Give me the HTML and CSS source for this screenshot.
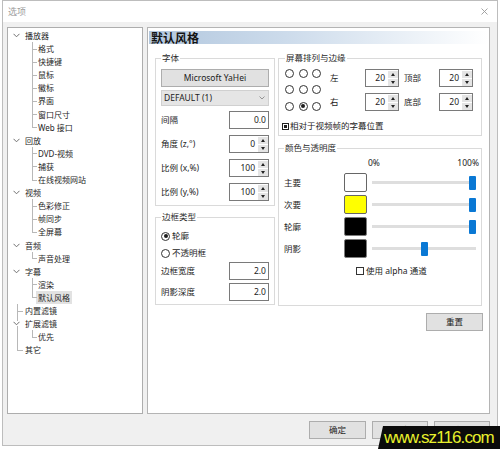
FILE: index.html
```html
<!DOCTYPE html>
<html lang="zh-CN">
<head>
<meta charset="utf-8">
<title>选项</title>
<link rel="stylesheet" href="styles.css">
</head>
<body>
<div class="window">
  <div class="titlebar">
    <span class="title">选项</span>
    <svg class="close" width="7" height="7" viewBox="0 0 7 7"><path d="M0.5 0.5L6.5 6.5M6.5 0.5L0.5 6.5" stroke="#9a9a9a" stroke-width="0.9" fill="none"/></svg>
  </div>

  <div class="main">
    <div class="tree">
      <div class="row root"><svg class="chev" width="7" height="5" viewBox="0 0 7 5"><polyline points="0.5,0.8 3.5,3.8 6.5,0.8" fill="none" stroke="#707070" stroke-width="1"/></svg>播放器</div>
      <div class="children">
        <div class="row child">格式</div>
        <div class="row child">快捷键</div>
        <div class="row child">鼠标</div>
        <div class="row child">徽标</div>
        <div class="row child">界面</div>
        <div class="row child">窗口尺寸</div>
        <div class="row child">Web 接口</div>
      </div>
      <div class="row root"><svg class="chev" width="7" height="5" viewBox="0 0 7 5"><polyline points="0.5,0.8 3.5,3.8 6.5,0.8" fill="none" stroke="#707070" stroke-width="1"/></svg>回放</div>
      <div class="children">
        <div class="row child">DVD-视频</div>
        <div class="row child">捕获</div>
        <div class="row child">在线视频网站</div>
      </div>
      <div class="row root"><svg class="chev" width="7" height="5" viewBox="0 0 7 5"><polyline points="0.5,0.8 3.5,3.8 6.5,0.8" fill="none" stroke="#707070" stroke-width="1"/></svg>视频</div>
      <div class="children">
        <div class="row child">色彩修正</div>
        <div class="row child">帧同步</div>
        <div class="row child">全屏幕</div>
      </div>
      <div class="row root"><svg class="chev" width="7" height="5" viewBox="0 0 7 5"><polyline points="0.5,0.8 3.5,3.8 6.5,0.8" fill="none" stroke="#707070" stroke-width="1"/></svg>音频</div>
      <div class="children">
        <div class="row child">声音处理</div>
      </div>
      <div class="row root"><svg class="chev" width="7" height="5" viewBox="0 0 7 5"><polyline points="0.5,0.8 3.5,3.8 6.5,0.8" fill="none" stroke="#707070" stroke-width="1"/></svg>字幕</div>
      <div class="children">
        <div class="row child">渲染</div>
        <div class="row child"><span class="sel">默认风格</span></div>
      </div>
      <div class="tail">
        <div class="row leaf">内置滤镜</div>
        <div class="row root"><svg class="chev" width="7" height="5" viewBox="0 0 7 5"><polyline points="0.5,0.8 3.5,3.8 6.5,0.8" fill="none" stroke="#707070" stroke-width="1"/></svg>扩展滤镜</div>
        <div class="children">
          <div class="row child">优先</div>
        </div>
        <div class="row leaf">其它</div>
      </div>
    </div>

    <div class="panel">
      <div class="panel-header">默认风格</div>
      <div class="panel-body">
        <div class="col-left">
          <fieldset class="group group-font">
            <legend>字体</legend>
            <button class="btn btn-wide">Microsoft YaHei</button>
            <div class="combo"><span>DEFAULT (1)</span><svg width="6" height="4" viewBox="0 0 6 4"><polyline points="0.5,0.5 3,3 5.5,0.5" fill="none" stroke="#8a8a8a" stroke-width="0.9"/></svg></div>
            <div class="frow first"><span>间隔</span><div class="input">0.0</div></div>
            <div class="frow"><span>角度 (z,°)</span><div class="input spin"><span class="val">0</span><span class="spinner"><i class="up"></i><i class="down"></i></span></div></div>
            <div class="frow"><span>比例 (x,%)</span><div class="input spin"><span class="val">100</span><span class="spinner"><i class="up"></i><i class="down"></i></span></div></div>
            <div class="frow"><span>比例 (y,%)</span><div class="input spin"><span class="val">100</span><span class="spinner"><i class="up"></i><i class="down"></i></span></div></div>
          </fieldset>

          <fieldset class="group group-border">
            <legend>边框类型</legend>
            <div class="rrow"><span class="radio on"></span>轮廓</div>
            <div class="rrow"><span class="radio"></span>不透明框</div>
            <div class="frow tight"><span>边框宽度</span><div class="input">2.0</div></div>
            <div class="frow tight"><span>阴影深度</span><div class="input">2.0</div></div>
          </fieldset>
        </div>

        <div class="col-right">
          <fieldset class="group group-screen">
            <legend>屏幕排列与边缘</legend>
            <div class="align-block">
              <div class="radio-grid">
                <span class="radio"></span><span class="radio"></span><span class="radio"></span>
                <span class="radio"></span><span class="radio"></span><span class="radio"></span>
                <span class="radio"></span><span class="radio on"></span><span class="radio"></span>
              </div>
              <div class="margin-grid">
                <span class="mlabel">左</span>
                <div class="input spin"><span class="val">20</span><span class="spinner"><i class="up"></i><i class="down"></i></span></div>
                <span class="mlabel pad">顶部</span>
                <div class="input spin"><span class="val">20</span><span class="spinner"><i class="up"></i><i class="down"></i></span></div>
                <span class="mlabel">右</span>
                <div class="input spin"><span class="val">20</span><span class="spinner"><i class="up"></i><i class="down"></i></span></div>
                <span class="mlabel pad">底部</span>
                <div class="input spin"><span class="val">20</span><span class="spinner"><i class="up"></i><i class="down"></i></span></div>
              </div>
            </div>
            <div class="check-row rel"><span class="check filled"></span>相对于视频帧的字幕位置</div>
          </fieldset>

          <fieldset class="group group-color">
            <legend>颜色与透明度</legend>
            <div class="color-head"><span>0%</span><span>100%</span></div>
            <div class="color-row"><span class="clabel">主要</span><span class="swatch sw-white"></span><div class="slider" style="--v:100"><span class="thumb"></span></div></div>
            <div class="color-row"><span class="clabel">次要</span><span class="swatch sw-yellow"></span><div class="slider" style="--v:100"><span class="thumb"></span></div></div>
            <div class="color-row"><span class="clabel">轮廓</span><span class="swatch sw-black"></span><div class="slider" style="--v:100"><span class="thumb"></span></div></div>
            <div class="color-row"><span class="clabel">阴影</span><span class="swatch sw-black"></span><div class="slider" style="--v:50"><span class="thumb"></span></div></div>
            <div class="check-row alpha"><span class="check"></span>使用 alpha 通道</div>
          </fieldset>

          <div class="reset-row"><button class="btn btn-reset">重置</button></div>
        </div>
      </div>
    </div>
  </div>

  <div class="footer">
    <button class="btn btn-foot btn-ok">确定</button>
    <button class="btn btn-foot">取消</button>
    <button class="btn btn-foot">应用</button>
  </div>

  <div class="watermark">www.sz116.com</div>
</div>
</body>
</html>
```

FILE: styles.css
```css
* { box-sizing: border-box; }

html, body {
  margin: 0;
  padding: 0;
  background: #ffffff;
}

body {
  width: 500px;
  height: 449px;
  overflow: hidden;
  font-family: "Noto Sans", "Noto Sans CJK SC", sans-serif;
  font-size: 8.5px;
  line-height: 12px;
  color: #1c1c1c;
}

.window {
  position: relative;
  margin-left: 2px;
  width: 496px;
  border: 1px solid #bdbdbd;
  background: #f0f0f0;
}

.titlebar {
  height: 21px;
  background: #ffffff;
  display: flex;
  align-items: center;
  justify-content: space-between;
  padding: 0 9px 0 5px;
}

.title {
  color: #9c9c9c;
  font-size: 9px;
  font-family: "Noto Sans CJK SC", sans-serif;
}

.main {
  display: flex;
  gap: 4px;
  padding: 5px 7px 0 4px;
}

/* ---------- tree ---------- */
.tree {
  width: 136px;
  height: 387px;
  background: #ffffff;
  border: 1px solid #adadad;
  padding-top: 1px;
  font-size: 8px;
  color: #262626;
}

.row {
  position: relative;
  height: 13.1px;
  line-height: 13.1px;
  white-space: nowrap;
  font-family: "Noto Sans", "Noto Sans CJK SC", sans-serif;
}

.row.root {
  display: flex;
  align-items: center;
  padding-left: 5px;
}

.chev {
  margin-right: 5px;
  flex: none;
}

.row.leaf {
  padding-left: 17px;
}

.row.child {
  padding-left: 30px;
}

.row.child::before {
  content: "";
  position: absolute;
  left: 24px;
  top: 0;
  bottom: 0;
  border-left: 1px solid #b8b8b8;
}

.row.child:last-child::before {
  bottom: 50%;
}

.row.child::after {
  content: "";
  position: absolute;
  left: 24px;
  top: 50%;
  width: 5px;
  border-top: 1px solid #b8b8b8;
}

.tail {
  position: relative;
}

.tail::before {
  content: "";
  position: absolute;
  left: 9px;
  top: 0;
  bottom: 6.5px;
  border-left: 1px solid #b8b8b8;
}

.row.leaf::after {
  content: "";
  position: absolute;
  left: 9px;
  top: 50%;
  width: 6px;
  border-top: 1px solid #b8b8b8;
}

.tail .row.root .chev {
  background: #ffffff;
}

.sel {
  display: inline-block;
  height: 13.1px;
  margin-left: -2px;
  padding: 0 2px;
  background: #e2e2e2;
}

/* ---------- panel ---------- */
.panel {
  width: 343px;
  height: 387px;
  background: #ffffff;
  border: 1px solid #b4b4b4;
  padding: 1px;
}

.panel-header {
  height: 13px;
  margin-top: 2px;
  line-height: 13px;
  padding-left: 2px;
  font-family: "Noto Sans CJK SC", sans-serif;
  font-size: 12px;
  font-weight: 700;
  color: #141414;
  background: linear-gradient(to right, #b2c7de 0%, #ccdbeb 40%, #ffffff 100%);
}

.panel-body {
  display: flex;
  gap: 3px;
  padding: 8px 6px 0 6px;
}

.col-left {
  width: 120px;
  display: flex;
  flex-direction: column;
}

.col-right {
  width: 204px;
  display: flex;
  flex-direction: column;
}

.group {
  margin: 0;
  min-width: 0;
  border: 1px solid #dadada;
}

.group legend {
  padding: 0 1px;
  margin-left: 0;
  line-height: 12px;
  color: #2a2a2a;
}

.group-font {
  padding: 5px 5px 4px 5px;
}

.group-border {
  margin-top: 5px;
  padding: 7px 5px 3px 5px;
}

.group-screen {
  padding: 5px 5px 3px 6px;
}

.group-color {
  margin-top: 6px;
  padding: 3px 5px 28px 5px;
}

/* ---------- controls ---------- */
.btn {
  margin: 0;
  padding: 0;
  font-family: "Noto Sans", "Noto Sans CJK SC", sans-serif;
  font-size: 8.5px;
  line-height: 12px;
  color: #1c1c1c;
  background: #e1e1e1;
  border: 1px solid #adadad;
}

.btn-wide {
  display: block;
  width: 100%;
  height: 18px;
}

.combo {
  margin-top: 3px;
  height: 16px;
  display: flex;
  align-items: center;
  justify-content: space-between;
  padding: 0 3px 0 2px;
  background: #e5e5e5;
  border: 1px solid #d0d0d0;
}

.frow {
  display: flex;
  align-items: center;
  justify-content: space-between;
  height: 18px;
  margin-top: 6px;
}

.frow.first {
  margin-top: 5px;
}

.frow.tight {
  margin-top: 3px;
}

.input {
  width: 40px;
  height: 18px;
  display: flex;
  align-items: center;
  justify-content: flex-end;
  padding-right: 2px;
  background: #ffffff;
  border: 1px solid #7a7a7a;
}

.input.spin {
  padding: 0;
}

.input .val {
  margin-right: 3px;
}

.spinner {
  width: 10px;
  height: 16px;
  display: flex;
  flex-direction: column;
  gap: 1px;
  padding: 0.5px 0;
}

.spinner i {
  flex: 1;
  display: flex;
  align-items: center;
  justify-content: center;
  background: #e4e4e4;
}

.spinner i.up::after {
  content: "";
  width: 0;
  height: 0;
  border-left: 2.5px solid transparent;
  border-right: 2.5px solid transparent;
  border-bottom: 3px solid #222;
}

.spinner i.down::after {
  content: "";
  width: 0;
  height: 0;
  border-left: 2.5px solid transparent;
  border-right: 2.5px solid transparent;
  border-top: 3px solid #222;
}

.rrow {
  display: flex;
  align-items: center;
  gap: 2px;
  height: 12px;
}

.rrow + .rrow {
  margin-top: 5px;
}

.radio {
  width: 9px;
  height: 9px;
  display: inline-flex;
  align-items: center;
  justify-content: center;
  border: 1px solid #333333;
  border-radius: 50%;
  background: #ffffff;
  flex: none;
}

.radio.on::after {
  content: "";
  width: 4px;
  height: 4px;
  border-radius: 50%;
  background: #1e1e1e;
}

/* screen group */
.align-block {
  display: flex;
  height: 42px;
}

.radio-grid {
  display: grid;
  grid-template-columns: repeat(3, 9px);
  grid-auto-rows: 9px;
  column-gap: 4.5px;
  row-gap: 7.5px;
  margin-top: -0.5px;
  margin-right: 9px;
}

.margin-grid {
  display: grid;
  grid-template-columns: 35px 34px 40px 34px;
  grid-auto-rows: 18px;
  row-gap: 6px;
  align-items: center;
}

.margin-grid .input {
  width: 34px;
}

.mlabel.pad {
  padding-left: 5px;
}

.check-row {
  display: flex;
  align-items: center;
  height: 12px;
}

.check-row.rel {
  margin-top: 9px;
  margin-left: -3px;
}

.check {
  width: 8px;
  height: 8px;
  margin-right: 2px;
  border: 1px solid #333333;
  background: #ffffff;
  flex: none;
}

.check.filled {
  width: 7px;
  height: 7px;
  padding: 1px;
  margin-right: 1px;
  border-color: #222;
}

.check.filled::after {
  content: "";
  display: block;
  width: 100%;
  height: 100%;
  background: #222222;
}

/* color group */
.color-head {
  display: flex;
  justify-content: space-between;
  height: 12px;
  padding-left: 84px;
  margin-right: -3px;
}

.color-row {
  display: flex;
  align-items: center;
  height: 19px;
  margin-top: 3px;
}

.color-head + .color-row {
  margin-top: 4px;
}

.clabel {
  width: 60px;
}

.swatch {
  width: 23px;
  height: 19px;
  border-radius: 2px;
  border: 1px solid #666666;
  flex: none;
}

.sw-white { background: #ffffff; }
.sw-yellow { background: #ffff00; }
.sw-black { background: #000000; border-color: #7c7c7c; }

.slider {
  flex: 1;
  height: 14px;
  margin-left: 5px;
  display: flex;
  align-items: center;
  background: linear-gradient(#dedede, #dedede) center / 100% 3px no-repeat;
}

.thumb {
  width: 7px;
  height: 14px;
  border-radius: 1px;
  background: #0a78d4;
  margin-left: calc((100% - 7px) * var(--v) / 100);
  flex: none;
}

.check-row.alpha {
  margin-top: 7px;
  padding-left: 72px;
}

.reset-row {
  display: flex;
  justify-content: flex-end;
  margin-top: 7px;
  margin-right: -1px;
}

.btn-reset {
  width: 57px;
  height: 18px;
}

/* ---------- footer ---------- */
.footer {
  display: flex;
  justify-content: flex-end;
  gap: 6px;
  padding: 7px 7px 6px 0;
}

.btn-foot {
  width: 56px;
  height: 18px;
}

.btn-ok {
  width: 57px;
}

.watermark {
  position: absolute;
  left: 375px;
  top: 425px;
  width: 124px;
  height: 23px;
  padding-left: 6px;
  background: #0b0b0b;
  clip-path: polygon(5px 0, 100% 0, 100% 100%, 0 100%);
  font-family: "Liberation Sans", Arial, sans-serif;
  font-size: 17px;
  line-height: 23px;
  letter-spacing: -0.9px;
  color: #e8f02c;
  white-space: nowrap;
}
```
